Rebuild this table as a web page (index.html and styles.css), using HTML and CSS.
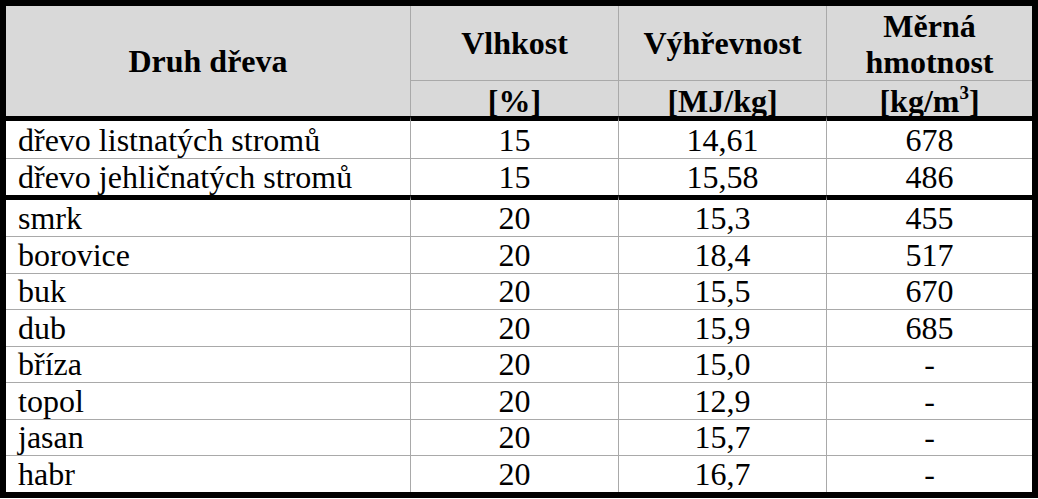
FILE: index.html
```html
<!DOCTYPE html>
<html lang="cs">
<head>
<meta charset="utf-8">
<title>Druh dřeva</title>
<link rel="stylesheet" href="styles.css">
</head>
<body>
<table class="wood">
  <colgroup>
    <col class="c1"><col class="c2"><col class="c3"><col class="c4">
  </colgroup>
  <thead>
    <tr class="h1">
      <th rowspan="2" class="first">Druh dřeva</th>
      <th>Vlhkost</th>
      <th>Výhřevnost</th>
      <th class="two">Měrná<br>hmotnost</th>
    </tr>
    <tr class="h2">
      <th>[%]</th>
      <th>[MJ/kg]</th>
      <th>[kg/m<sup>3</sup>]</th>
    </tr>
  </thead>
  <tbody class="g1">
    <tr class="thick"><td>dřevo listnatých stromů</td><td>15</td><td>14,61</td><td>678</td></tr>
    <tr><td>dřevo jehličnatých stromů</td><td>15</td><td>15,58</td><td>486</td></tr>
  </tbody>
  <tbody class="g2">
    <tr class="thick"><td>smrk</td><td>20</td><td>15,3</td><td>455</td></tr>
    <tr><td>borovice</td><td>20</td><td>18,4</td><td>517</td></tr>
    <tr><td>buk</td><td>20</td><td>15,5</td><td>670</td></tr>
    <tr><td>dub</td><td>20</td><td>15,9</td><td>685</td></tr>
    <tr><td>bříza</td><td>20</td><td>15,0</td><td>-</td></tr>
    <tr><td>topol</td><td>20</td><td>12,9</td><td>-</td></tr>
    <tr><td>jasan</td><td>20</td><td>15,7</td><td>-</td></tr>
    <tr><td>habr</td><td>20</td><td>16,7</td><td>-</td></tr>
  </tbody>
</table>
</body>
</html>
```

FILE: styles.css
```css
html, body {
  margin: 0;
  padding: 0;
  background: #ffffff;
  font-family: "Liberation Serif", "Times New Roman", serif;
}

.wood {
  border-collapse: separate;
  border-spacing: 0;
  border: 6px solid #000;
  width: 1038px;
  table-layout: fixed;
  font-size: 32px;
  color: #000;
}

.c1 { width: 404px; }
.c2 { width: 208px; }
.c3 { width: 208px; }
.c4 { width: 206px; }

.wood th,
.wood td {
  box-sizing: border-box;
  padding: 0;
  text-align: center;
  vertical-align: middle;
  border-left: 1px solid #a9a9a9;
  font-family: "Liberation Serif", "Times New Roman", serif;
  white-space: nowrap;
}

.wood th.first,
.wood td:first-child {
  border-left: none;
}

.wood th {
  background: #d9d9d9;
  font-weight: bold;
  line-height: 34px;
}

.h1 th {
  height: 74px;
}

.h1 th.two {
  line-height: 36px;
  padding-top: 2px;
}

.h2 th {
  height: 36px;
  line-height: 30px;
  padding-top: 4px;
  border-top: 1px solid #a9a9a9;
}

.wood td {
  height: 37px;
  line-height: 30px;
  border-top: 1px solid #a9a9a9;
}

.wood td:first-child {
  text-align: left;
  padding-left: 12px;
}

.g2 td {
  height: 36.5px;
}

.wood tr.thick td {
  border-top: 5px solid #000;
}

.g1 tr.thick td {
  height: 42px;
}

.g2 tr.thick td {
  height: 41px;
}

sup {
  font-size: 19px;
  line-height: 0;
  vertical-align: 13px;
}
```
